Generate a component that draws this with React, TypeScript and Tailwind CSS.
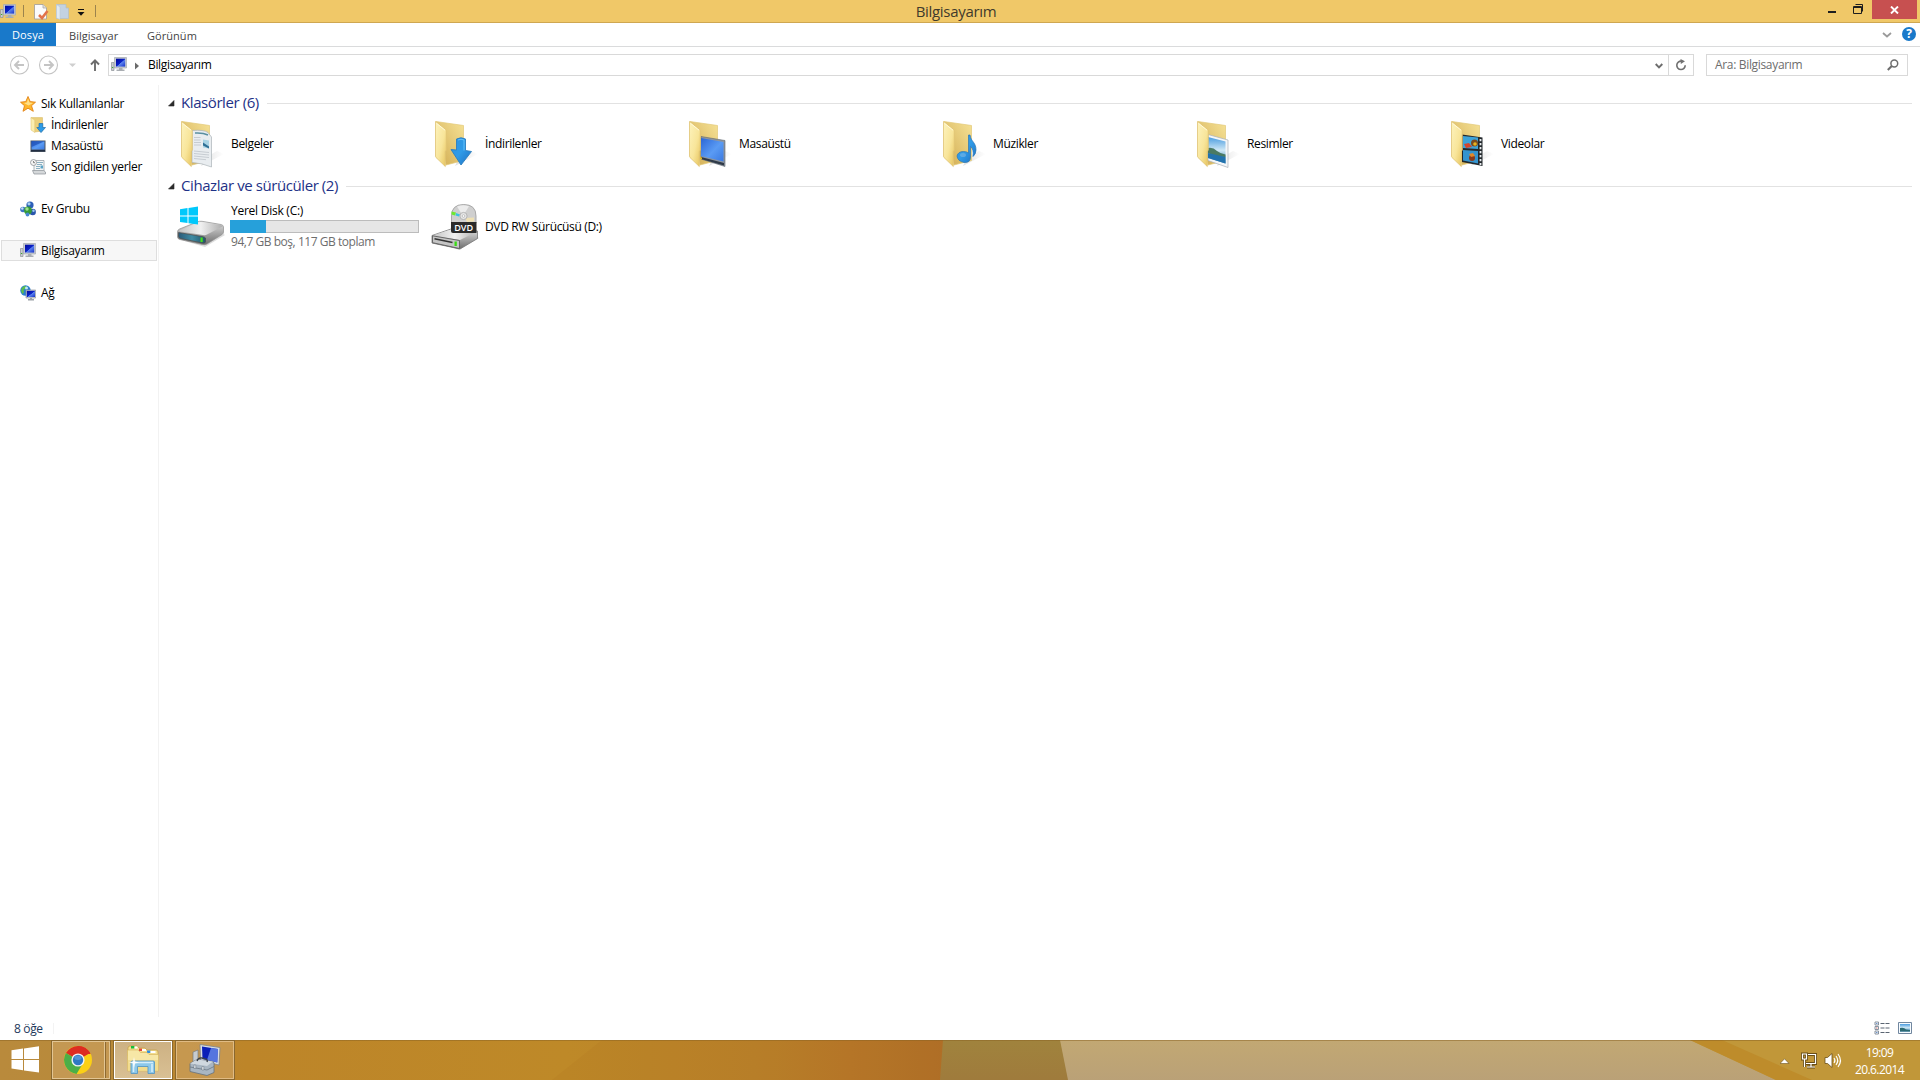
import React from "react";

type IconProps = { className?: string };

function Defs() {
  return (
    <svg className="absolute h-0 w-0" aria-hidden="true">
      <defs>
        <linearGradient id="flapG" x1="0" y1="0" x2="1" y2="1">
          <stop offset="0" stopColor="#fdf3bd" />
          <stop offset="0.55" stopColor="#f8e59a" />
          <stop offset="1" stopColor="#e6c35c" />
        </linearGradient>
        <linearGradient id="backG" x1="0" y1="1" x2="1" y2="0">
          <stop offset="0" stopColor="#cfa94e" />
          <stop offset="0.5" stopColor="#e3c673" />
          <stop offset="1" stopColor="#f6e296" />
        </linearGradient>
        <linearGradient id="shadeG" x1="0" y1="0" x2="1" y2="0">
          <stop offset="0" stopColor="#999" stopOpacity="0.5" />
          <stop offset="1" stopColor="#999" stopOpacity="0" />
        </linearGradient>
        <linearGradient id="blueG" x1="0" y1="0" x2="1" y2="1">
          <stop offset="0" stopColor="#2f93dd" />
          <stop offset="0.5" stopColor="#2f9be8" />
          <stop offset="1" stopColor="#1f6fc0" />
        </linearGradient>
        <linearGradient id="screenG" x1="0" y1="0" x2="1" y2="1">
          <stop offset="0" stopColor="#2b66d6" />
          <stop offset="0.55" stopColor="#5a9bf4" />
          <stop offset="1" stopColor="#3a78e0" />
        </linearGradient>
        <linearGradient id="navyG" x1="0" y1="0" x2="1" y2="1">
          <stop offset="0" stopColor="#00099c" />
          <stop offset="0.5" stopColor="#0b22c8" />
          <stop offset="0.55" stopColor="#5c83ee" />
          <stop offset="1" stopColor="#1733c9" />
        </linearGradient>
        <linearGradient id="metalG" x1="0" y1="0" x2="1" y2="0">
          <stop offset="0" stopColor="#c4c4c4" />
          <stop offset="0.5" stopColor="#f0f0f0" />
          <stop offset="1" stopColor="#aeaeae" />
        </linearGradient>
        <linearGradient id="sideG" x1="0" y1="0" x2="0" y2="1">
          <stop offset="0" stopColor="#e2e2e2" />
          <stop offset="1" stopColor="#6e6e6e" />
        </linearGradient>
        <linearGradient id="tealG" x1="0" y1="0" x2="1" y2="0">
          <stop offset="0" stopColor="#2a5a78" />
          <stop offset="0.5" stopColor="#3f8ba3" />
          <stop offset="1" stopColor="#22566b" />
        </linearGradient>
        <linearGradient id="skyG" x1="0" y1="0" x2="0" y2="1">
          <stop offset="0" stopColor="#4a9ce0" />
          <stop offset="0.5" stopColor="#cfe8f5" />
          <stop offset="1" stopColor="#2f7fb8" />
        </linearGradient>
      </defs>
    </svg>
  );
}

/* 48px open folder with a slot for whatever sticks out of it */
function Folder({ children, over }: { children?: React.ReactNode; over?: React.ReactNode }) {
  return (
    <svg viewBox="0 0 48 48" className="h-12 w-12 shrink-0">
      <path d="M24 46 L47 34 L40 31 L28 38Z" fill="url(#shadeG)" opacity="0.6" />
      <path d="M5 1.500 L32.500 5.500 V40.500 L15 45Z" fill="url(#backG)" stroke="#e2c877" strokeWidth="0.7" />
      {children}
      <path d="M4.500 1.500 L14.700 9.500 Q15.300 10 15.300 11 V30 L14.300 31.500 V46.500 L5 37.500 Q4.500 37 4.500 36Z" fill="url(#flapG)" stroke="#e0c374" strokeWidth="0.8" />
      <path d="M5.500 3.300 L14 10.200" stroke="#fffbe0" strokeWidth="0.9" />
      {over}
    </svg>
  );
}

const Documents = () => (
  <Folder>
    <path d="M15 10.500 Q27 9.500 31 12.500 L34.500 17 V47 Q25 43 15 42.500Z" fill="#e9edf0" stroke="#aab3b8" strokeWidth="0.7" />
    <path d="M18 13 Q26 12.500 31 15" stroke="#5a8fa0" strokeWidth="1.500" fill="none" />
    <path d="M17 17.500 H23.500 M17 20 H23.500 M17 22.500 H24 M17 25 H24 M17 31 L32 32.500 M17 33.500 L32 35 M17 36 L32 37.500 M17 38.500 L29 39.700" stroke="#bcc3c9" strokeWidth="0.8" />
    <path d="M26 19.500 L32 20.500 V28.500 L26 27.500Z" fill="#a9d3e4" />
    <path d="M26 22.500 L32 26.500 V28.500 L26 25.500Z" fill="#2e6f95" />
  </Folder>
);

const Downloads = () => (
  <Folder
    over={
      <>
        <path d="M25.500 19 Q30 16.500 34.500 19 V30.500 L40.500 31.500 L30 45 L20 29.500 L25.500 30Z" fill="url(#blueG)" stroke="#2b7fc0" strokeWidth="0.9" />
        <path d="M27 20 Q30 18.500 33 20 V30.500" stroke="#63c0fa" strokeWidth="1" fill="none" />
      </>
    }
  />
);

const Desktop = () => (
  <Folder>
    <path d="M16 16.500 L40 20.500 V46.500 L16 39Z" fill="#8e959e" stroke="#5d6670" strokeWidth="0.6" />
    <path d="M16 18 L38.500 22 V41.500 L16 36Z" fill="url(#screenG)" />
    <path d="M16 37 L39 43 V45.500 L16 39Z" fill="#2f3a48" />
    <path d="M15 37 l2 0.500 v2 l-2 -0.500z" fill="#e6b821" />
  </Folder>
);

const Music = () => (
  <Folder
    over={
      <>
        <path d="M29.500 15 H31 C32 22 37 22 37 30 Q37 34 34 36.500 Q35 29 31.500 26.500 V37 Q31.500 43 25 42.500 Q18.500 41 18 36 Q19 31.500 24.500 31.500 Q28 31.500 29.500 33Z" fill="url(#blueG)" stroke="#2a75b5" strokeWidth="0.7" />
        <ellipse cx="24" cy="35" rx="3" ry="2" fill="#79b5e5" opacity="0.6" />
      </>
    }
  />
);

const Pictures = () => (
  <Folder>
    <path d="M15 14.500 L35 20 V47.500 L15 40.500Z" fill="#f4f6f8" stroke="#a9b0b8" strokeWidth="0.7" />
    <path d="M15 17 L32.500 21.500 V43.500 L15 38Z" fill="url(#skyG)" />
    <path d="M15 28 Q20 27 24 31 Q28 34 32.500 34.500 V37 Q22 37 15 33Z" fill="#4a7a63" />
    <path d="M15 33 L32.500 37 V43.500 L15 38Z" fill="#2272ad" />
  </Folder>
);

const Videos = () => (
  <Folder>
    <path d="M15 14.500 L35.500 17.500 V46 L15 42Z" fill="#23282c" />
    <path d="M16 16 L31 17.500 V29 L16 28Z" fill="#3da3d8" />
    <path d="M16 30 L31 31 V43.500 L16 40.500Z" fill="#3494cf" />
    <circle cx="27.500" cy="23" r="3.500" fill="#7b4a1f" />
    <circle cx="28" cy="24" r="1.800" fill="#e6b421" />
    <path d="M17 24 l5 -1 l3 4 l-6 1z" fill="#d5452c" />
    <circle cx="25" cy="38" r="3" fill="#8a3b1c" />
    <path d="M22 34 l4 -1 l2 3 l-4 1z" fill="#e2882a" />
    <path d="M33.500 19 V45" stroke="#e9edf0" strokeWidth="1.800" strokeDasharray="2.200 1.800" />
  </Folder>
);

const HardDisk = () => (
  <svg viewBox="0 0 48 48" className="h-12 w-12 shrink-0">
    <path d="M4 37 L28 44 L48 32 L45 30 L20 38Z" fill="#bbb" opacity="0.5" />
    <path d="M0.500 28.500 Q0.500 27 2.500 26 L20 19 Q22 18 25 18.300 L44 21.500 Q46.500 22 46.500 24 V29 Q46.500 30.500 45 31.500 L30 41 Q28 42 25.500 41.500 L3 36.500 Q0.500 36 0.500 34Z" fill="url(#sideG)" stroke="#8f8f8f" strokeWidth="0.7" />
    <path d="M2 27.500 L21 19.500 Q22.500 18.800 25 19.100 L44.500 22.300 L45.500 23.500 L30 31.500 Q28.500 32.500 26 32 L3 28.500Z" fill="url(#metalG)" />
    <path d="M1.500 29.500 L25 33.500 Q28 34 28.500 35 V39 Q28 40.500 25.500 40 L3.500 35.500 Q1.500 35 1.500 33.500Z" fill="url(#tealG)" stroke="#4a4a4a" strokeWidth="0.700" />
    <path d="M23.500 34.500 h2.200 v4.500 h-2.200z" fill="#45e01a" />
    <path d="M3 6.200 L10.500 5 V12.500 H3Z M11.500 4.900 L21 3.500 V12.500 H11.500Z M3 13.500 H10.500 V20 L3 19Z M11.500 13.500 H21 V21.500 L11.500 20.200Z" fill="#00c8fb" />
  </svg>
);

const DvdDrive = () => (
  <svg viewBox="0 0 48 48" className="h-12 w-12 shrink-0">
    <path d="M4 38 L28 47 L48 35 L40 30Z" fill="#bbb" opacity="0.5" />
    <path d="M1 32.500 L20 26 L46.500 28 V35.500 L29 46 L1 40Z" fill="url(#sideG)" stroke="#777" strokeWidth="0.8" />
    <path d="M1.500 32.500 L20 26.500 L46 28.500 L29 37Z" fill="url(#metalG)" />
    <path d="M1.500 32.800 L28.500 37.500 V45.500 L1.500 39.700Z" fill="#c4c4c4" stroke="#5d5d5d" strokeWidth="0.9" />
    <path d="M3.500 35.700 L21.500 39.500" stroke="#333" strokeWidth="1.500" />
    <path d="M23.500 38.500 h2.300 v4.500 h-2.300z" fill="#38dc12" />
    <path d="M20.500 20 V13 Q20.500 1.500 32.700 1.500 Q45 1.500 45 13 V20Z" fill="#cfcfcf" stroke="#a2a2a2" strokeWidth="0.9" />
    <path d="M32 13 L26 3.500 Q32 1 38 3.200Z" fill="#ececec" />
    <path d="M20.500 8.500 l4.500 1 l-1 3 l-3.500 -1z" fill="#6ee82f" />
    <path d="M25 10 l4 1.500 l-1 2 l-3.500 -1z" fill="#3cc3e0" />
    <path d="M34 15 l9 -0.500 v4 l-7 0.500z" fill="#eee0b4" />
    <circle cx="32.500" cy="13" r="3.600" fill="#e6e6e6" stroke="#a9a9a9" strokeWidth="0.800" />
    <circle cx="32.500" cy="13" r="1.300" fill="#fff" stroke="#999" strokeWidth="0.500" />
    <path d="M20 19 H45.500 V30 H22 Q20 30 20 28Z" fill="#2a2a2a" />
    <text x="32.700" y="28" textAnchor="middle" fontSize="9.500" fontWeight="600" fill="#fff" fontFamily="Open Sans, sans-serif" textLength="19" lengthAdjust="spacingAndGlyphs">DVD</text>
  </svg>
);

/* 16px icons */
const Computer = ({ className = "" }: IconProps) => (
  <svg viewBox="0 0 16 16" className={`h-4 w-4 shrink-0 ${className}`}>
    <path d="M0.500 5.500 H3 V13.500 H0.500Z" fill="#c9cdd1" stroke="#8c9196" strokeWidth="0.700" />
    <path d="M1 10.500 h1.200" stroke="#3fae2a" strokeWidth="1" />
    <path d="M3.500 0.500 H15.500 V11 H3.500Z" fill="#c8ccd2" stroke="#a4a9b0" strokeWidth="0.700" />
    <path d="M5 1.700 H14.200 V9.600 H5Z" fill="url(#navyG)" />
    <path d="M8 11 h3.500 v1.500 h2 v1.500 h-8 v-1.500 h2.500z" fill="#a9adb2" />
  </svg>
);

const Star = () => (
  <svg viewBox="0 0 16 16" className="h-4 w-4 shrink-0">
    <path d="M8 0.500 L10.200 5.600 L15.500 6.200 L11.500 9.700 L13.300 15.300 L8 12.200 L3 15.300 L4.500 9.700 L0.500 6.200 L5.800 5.600Z" fill="#ffb62b" stroke="#e2831a" strokeWidth="0.900" />
    <path d="M8 2.500 L9.500 6.400 L13 7 L8.500 9.500 L4 7 L7 6.400Z" fill="#ffe08a" />
  </svg>
);

const SmallDownloads = () => (
  <svg viewBox="0 0 16 16" className="h-4 w-4 shrink-0">
    <path d="M1 0.600 H12.500 V14 L4.500 15Z" fill="#ecd07c" stroke="#d5b45a" strokeWidth="0.500" />
    <path d="M1 0.600 L4.800 3 V15.500 L1 13Z" fill="#fbeeb0" stroke="#dcbf6c" strokeWidth="0.500" />
    <path d="M9 6.500 H12.800 V10.500 H15.500 L11 15.600 L6.800 10.500 H9Z" fill="#2c9be8" stroke="#1f6fb0" strokeWidth="0.700" />
  </svg>
);

const SmallDesktop = () => (
  <svg viewBox="0 0 16 16" className="h-4 w-4 shrink-0">
    <path d="M0.500 2.500 H15.500 V14 H0.500Z" fill="#4b5560" />
    <path d="M1.500 3.300 H14.500 V11.500 H1.500Z" fill="url(#screenG)" />
    <path d="M1.500 3.300 H14.500 L1.500 9Z" fill="#1c4fb4" opacity="0.7" />
    <path d="M1 12.700 H15" stroke="#1d2b40" strokeWidth="1.200" />
  </svg>
);

const Recent = () => (
  <svg viewBox="0 0 16 16" className="h-4 w-4 shrink-0">
    <path d="M4 1.500 H14 V12.500 H4Z" fill="#f3f5f6" stroke="#9ba2a8" strokeWidth="0.800" />
    <path d="M7 3.500 H13 M7 5.500 H12 M6 7.500 H10 M6 9.500 H10" stroke="#6f9db3" strokeWidth="0.800" />
    <path d="M10.500 6.500 H13 V9.500 H10.500Z" fill="#5aa3c6" />
    <path d="M2.500 11.500 H13.500 L15.500 13 V15 H4Z" fill="#d5d8da" stroke="#8b9196" strokeWidth="0.700" />
    <circle cx="3.500" cy="3.500" r="3" fill="#f4f4f4" stroke="#8b9094" strokeWidth="0.800" />
    <path d="M3.500 2 V3.700 H5" stroke="#555" strokeWidth="0.700" fill="none" />
  </svg>
);

const HomeGroup = () => (
  <svg viewBox="0 0 16 16" className="h-4 w-4 shrink-0">
    <circle cx="10" cy="4" r="3.600" fill="#2c5fb8" />
    <circle cx="9" cy="2.800" r="1.600" fill="#a8d0f0" />
    <circle cx="3" cy="8.500" r="2.800" fill="#3d74c4" />
    <circle cx="2.300" cy="7.500" r="1.200" fill="#bfe0f7" />
    <circle cx="12.700" cy="11" r="3.200" fill="#2a56ac" />
    <circle cx="13.500" cy="9.700" r="1.200" fill="#9cc8ee" />
    <circle cx="8" cy="9.500" r="3.900" fill="#359a37" />
    <circle cx="7" cy="8" r="1.700" fill="#9ee38f" />
    <circle cx="7.500" cy="13.500" r="1.900" fill="#4787cf" />
  </svg>
);

const Network = () => (
  <svg viewBox="0 0 16 16" className="h-4 w-4 shrink-0">
    <circle cx="5.500" cy="5.500" r="5.200" fill="#2a7fd0" />
    <path d="M1.500 3.500 Q4 0 7 1.500 Q6 4 3.500 4.500 Q4.500 7 3 9 Q0.500 7 1.500 3.500Z" fill="#5dbf4a" />
    <circle cx="6.500" cy="3" r="1.500" fill="#bfe6f7" />
    <path d="M6 5 H15.700 V13 H6Z" fill="#cdd2d8" stroke="#858b92" strokeWidth="0.600" />
    <path d="M6.800 5.800 H15 V12 H6.800Z" fill="url(#navyG)" />
    <path d="M10 13 h2 v1 h2 v1.500 h-6 v-1.500 h2z" fill="#9ca2a8" />
  </svg>
);

function TitleBar() {
  return (
    <header className="relative flex h-[23px] items-start border-b border-[#cfa751] bg-[#f0c868]">
      <Computer className="mt-[4px]" />
      <div className="ml-[7px] mt-[5px] h-[12px] w-px bg-[#9c844d]" />
      <svg viewBox="0 0 16 16" className="ml-[9px] mt-[4px] h-4 w-4">
        <path d="M1.500 0.500 H10 L13.500 4 V15 H1.500Z" fill="#fbfbfb" stroke="#a9a49b" strokeWidth="0.900" />
        <path d="M10 0.500 V4 H13.500" fill="#ddd" stroke="#a9a49b" strokeWidth="0.700" />
        <path d="M6 11 L9 14 L14.500 7" stroke="#e2734a" strokeWidth="2.600" fill="none" />
      </svg>
      <svg viewBox="0 0 16 16" className="ml-[6px] mt-[4px] h-4 w-4">
        <path d="M1.500 0.500 H11 V4 H13.500 V14.500 H1.500Z" fill="#c3d2e2" stroke="#b0bfcc" strokeWidth="0.700" />
        <path d="M1.500 0.500 L5 3 V15.500 L1.500 14Z" fill="#e0e9f2" stroke="#b7c4d2" strokeWidth="0.500" />
      </svg>
      <svg viewBox="0 0 8 8" className="ml-[6px] mt-[9px] h-2 w-2">
        <path d="M1 0.500 H7" stroke="#111" />
        <path d="M0.500 3 H7.500 L4 6.800Z" fill="#111" />
      </svg>
      <div className="ml-[10px] mt-[5px] h-[12px] w-px bg-[#9c844d]" />
      <div className="pointer-events-none absolute inset-x-0 top-0 flex h-[23px] justify-center pr-[8px]">
        <h1 className="text-[15px] leading-[23px] tracking-[-0.3px] text-[#403a2c]">Bilgisayarım</h1>
      </div>
      <div className="ml-auto flex items-start">
        <svg viewBox="0 0 44 20" className="h-5 w-11">
          <path d="M0 11 H8 V13 H0Z" fill="#1e1e1e" />
          <path d="M25.500 6.500 H33.500 V13.500 H25.500Z M25 7.500 H34 M27.500 4.500 H34.500 V11.500" fill="none" stroke="#1e1e1e" />
        </svg>
        <button className="mr-[3px] flex h-[19px] w-[45px] items-center justify-center bg-[#c75050]">
          <svg viewBox="0 0 9 8" className="h-2 w-[9px]">
            <path d="M1 0.500 L8 7.500 M8 0.500 L1 7.500" stroke="#fff" strokeWidth="1.900" />
          </svg>
        </button>
      </div>
    </header>
  );
}

function Ribbon() {
  return (
    <nav className="flex h-6 border-b border-[#dadbdc] text-[11px] leading-[26px] text-[#444]">
      <div className="h-[23px] w-[56px] bg-[#1979ca] pl-[12px] leading-[24px] tracking-[0.1px] text-white">Dosya</div>
      <div className="ml-[13px] w-[78px] tracking-[0.03px]">Bilgisayar</div>
      <div className="tracking-[0.05px]">Görünüm</div>
      <svg viewBox="0 0 10 6" className="ml-auto mr-[10px] mt-[9px] h-[6px] w-[10px]">
        <path d="M1 1 L5 4.500 L9 1" stroke="#9a9a9a" strokeWidth="1.800" fill="none" />
      </svg>
      <div className="mr-[4px] mt-[4px] flex h-[14px] w-[14px] items-center justify-center rounded-full bg-[#1979ca] text-[12px] font-bold leading-none text-white">?</div>
    </nav>
  );
}

function AddressRow() {
  return (
    <div className="flex h-[38px] items-start pt-[7px] text-[12px]">
      <svg viewBox="0 0 98 22" className="h-[22px] w-[98px] overflow-visible">
        <g fill="none" stroke="#c4c4c4" strokeWidth="1.100">
          <circle cx="19.500" cy="11" r="9" />
          <circle cx="48.500" cy="11" r="9" />
          <path d="M24 11 H15.500 M19 7 L15 11 L19 15 M44 11 H52.500 M49 7 L53 11 L49 15" strokeWidth="1.900" />
        </g>
        <path d="M69 9.500 H76 L72.500 13Z" fill="#cfcfcf" />
        <path d="M95 17 V6.500 M91 10.500 L95 6.300 L99 10.500" fill="none" stroke="#6d6d6d" strokeWidth="1.900" />
      </svg>
      <div className="ml-[10px] flex h-[22px] w-[1586px] items-center border border-[#d9d9d9]">
        <Computer className="ml-[2px]" />
        <svg viewBox="0 0 4 8" className="ml-[8px] mt-px h-2 w-1">
          <path d="M0 0.500 L4 4 L0 7.500Z" fill="#6a6a6a" />
        </svg>
        <span className="ml-[9px] tracking-[-0.33px] text-black">Bilgisayarım</span>
        <svg viewBox="0 0 8 6" className="ml-auto mr-[5px] mt-px h-[6px] w-2">
          <path d="M0.700 1 L4 4.300 L7.300 1" stroke="#6d6d6d" strokeWidth="1.900" fill="none" />
        </svg>
        <div className="flex h-full w-[25px] items-center justify-center border-l border-[#d9d9d9]">
          <svg viewBox="0 0 12 12" className="h-3 w-3">
            <path d="M6.500 2.200 A4.200 4.200 0 1 0 10.200 6.300" fill="none" stroke="#707070" strokeWidth="1.600" />
            <path d="M5.500 0 L10 2.200 L5.800 5Z" fill="#707070" />
          </svg>
        </div>
      </div>
      <div className="ml-[12px] flex h-[22px] w-[202px] items-center justify-between border border-[#d9d9d9] pl-[8px] pr-[8px]">
        <span className="tracking-[-0.33px] text-[#6d6d6d]">Ara: Bilgisayarım</span>
        <svg viewBox="0 0 12 12" className="h-3 w-3">
          <circle cx="7.300" cy="4.500" r="3.400" fill="none" stroke="#6d6d6d" strokeWidth="1.500" />
          <path d="M4.800 7 L0.800 11" stroke="#6d6d6d" strokeWidth="2" />
        </svg>
      </div>
    </div>
  );
}

function NavItem({ icon, label, child = false, active = false }: { icon: React.ReactNode; label: string; child?: boolean; active?: boolean }) {
  return (
    <li
      className={`flex h-[21px] items-center gap-[5px] border ${child ? "pl-[28px]" : "pl-[18px]"} ${active ? "border-[#dedede] bg-[#f7f7f7]" : "border-transparent"}`}
    >
      {icon}
      <span className="whitespace-nowrap text-[12px] leading-none tracking-[-0.32px]">{label}</span>
    </li>
  );
}

function Sidebar() {
  return (
    <aside className="w-[159px] border-r border-[#f2f2f2] pl-px pr-px pt-[8px]">
      <ul>
        <NavItem icon={<Star />} label="Sık Kullanılanlar" />
        <NavItem icon={<SmallDownloads />} label="İndirilenler" child />
        <NavItem icon={<SmallDesktop />} label="Masaüstü" child />
        <NavItem icon={<Recent />} label="Son gidilen yerler" child />
      </ul>
      <ul className="mt-[21px] flex flex-col gap-[21px]">
        <NavItem icon={<HomeGroup />} label="Ev Grubu" />
        <NavItem icon={<Computer />} label="Bilgisayarım" active />
        <NavItem icon={<Network />} label="Ağ" />
      </ul>
    </aside>
  );
}

function SectionTitle({ children }: { children: React.ReactNode }) {
  return (
    <div className="flex h-6 items-center">
      <svg viewBox="0 0 7 7" className="ml-[9px] h-[7px] w-[7px]">
        <path d="M6 0.500 V6 H0.500Z" fill="#2a2a2a" stroke="#2a2a2a" strokeWidth="0.600" />
      </svg>
      <h2 className="-mt-[2px] ml-[6px] whitespace-nowrap text-[15px] leading-[22px] tracking-[-0.42px] text-[#1e3287]">{children}</h2>
      <div className="ml-[8px] mr-[8px] mt-px h-px flex-1 bg-[#e2e2e2]" />
    </div>
  );
}

function Tile({ icon, children }: { icon: React.ReactNode; children: React.ReactNode }) {
  return (
    <div className="flex h-12 w-[254px] items-center">
      {icon}
      <div className="ml-[6px] text-[12px] leading-[16px] tracking-[-0.35px]">{children}</div>
    </div>
  );
}

function Content() {
  return (
    <main className="flex-1 pt-[6px]">
      <SectionTitle>Klasörler (6)</SectionTitle>
      <div className="mt-[5px] flex pl-[18px]">
        <Tile icon={<Documents />}>Belgeler</Tile>
        <Tile icon={<Downloads />}>İndirilenler</Tile>
        <Tile icon={<Desktop />}>Masaüstü</Tile>
        <Tile icon={<Music />}>Müzikler</Tile>
        <Tile icon={<Pictures />}>Resimler</Tile>
        <Tile icon={<Videos />}>Videolar</Tile>
      </div>
      <div className="mt-[6px]">
        <SectionTitle>Cihazlar ve sürücüler (2)</SectionTitle>
      </div>
      <div className="mt-[5px] flex pl-[18px]">
        <Tile icon={<HardDisk />}>
          <div className="-mt-px pb-px leading-[17px] tracking-[-0.25px]">Yerel Disk (C:)</div>
          <div className="-ml-px h-[13px] w-[189px] border border-[#bcbcbc] bg-[#e6e6e6]">
            <div className="-ml-px -mt-px h-[13px] w-[36px] bg-[#26a0da]" />
          </div>
          <div className="whitespace-nowrap leading-[18px] tracking-[-0.46px] text-[#6d6d6d]">94,7 GB boş, 117 GB toplam</div>
        </Tile>
        <Tile icon={<DvdDrive />}>DVD RW Sürücüsü (D:)</Tile>
      </div>
    </main>
  );
}

function StatusBar() {
  return (
    <footer className="flex h-[23px] items-center pl-[14px] pr-[8px]">
      <span className="text-[12px] leading-none tracking-[-0.35px] text-[#1e395b]">8 öğe</span>
      <div className="ml-[10px] h-[11px] w-px bg-[#f3f3f3]" />
      <svg viewBox="0 0 16 14" className="-mt-[2px] ml-auto h-[14px] w-4">
        <g fill="#fff" stroke="#7b8794" strokeWidth="0.900">
          <path d="M1 1 h3.500 v3 h-3.500z M1 5.500 h3.500 v3 h-3.500z M1 10 h3.500 v3 h-3.500z" />
        </g>
        <path d="M2.200 2.500 h1.200 M2.200 11.500 h1.200" stroke="#4b7cc0" />
        <path d="M2.200 7 h1.200" stroke="#c04b4b" />
        <path d="M6.500 2.500 h4 M11.500 2.500 h4 M6.500 7 h4 M11.500 7 h4 M6.500 11.500 h4 M11.500 11.500 h4" stroke="#5a6572" />
      </svg>
      <svg viewBox="0 0 14 12" className="-mt-px ml-[8px] h-3 w-[14px]">
        <path d="M0.500 0.500 H13.500 V11.500 H0.500Z" fill="#f6fbff" stroke="#71879f" />
        <path d="M2 2 H12 V9.500 H2Z" fill="url(#skyG)" />
        <path d="M2 6 Q6 5 8 7.500 L12 8 V9.500 H2Z" fill="#2c6a72" />
      </svg>
    </footer>
  );
}

function Wallpaper() {
  return (
    <svg viewBox="0 0 1920 40" preserveAspectRatio="none" className="absolute inset-0 h-10 w-full">
      <defs>
        <linearGradient id="wallL" x1="0" x2="1" y1="0" y2="0">
          <stop offset="0" stopColor="#b98a3c" />
          <stop offset="0.1" stopColor="#b88a3a" />
          <stop offset="0.26" stopColor="#bd8529" />
          <stop offset="0.6" stopColor="#be8928" />
          <stop offset="0.8" stopColor="#b9822a" />
          <stop offset="0.9" stopColor="#b77829" />
          <stop offset="1" stopColor="#b07028" />
        </linearGradient>
        <linearGradient id="wallO" x1="0" x2="0" y1="0" y2="1">
          <stop offset="0" stopColor="#a0833d" />
          <stop offset="1" stopColor="#9f7b3c" />
        </linearGradient>
        <linearGradient id="wallT" x1="0" x2="0" y1="0" y2="1">
          <stop offset="0" stopColor="#c2a873" />
          <stop offset="1" stopColor="#baa177" />
        </linearGradient>
      </defs>
      <path d="M0 0 H945 V40 H0Z" fill="url(#wallL)" />
      <path d="M602 0 H945 V40 H552Z" fill="#a96320" opacity="0.1" />
      <path d="M943 0 H1062 L1070 40 H940Z" fill="url(#wallO)" />
      <path d="M1060 0 H1700 L1780 40 H1068Z" fill="url(#wallT)" />
      <path d="M1690 0 H1920 V40 H1776Z" fill="#c19739" />
      <path d="M1690 0 H1722 L1812 40 H1776Z" fill="#be8c2b" />
      <path d="M0 0.500 H1920" stroke="#8b6424" opacity="0.5" />
    </svg>
  );
}

const Chrome = () => (
  <svg viewBox="0 0 30 30" className="h-[30px] w-[30px]">
    <circle cx="15" cy="15" r="14" fill="#fbd016" />
    <path d="M15 15 L2.900 8 A14 14 0 0 1 27.100 8Z" fill="#dd2c22" />
    <path d="M15 1 A14 14 0 0 1 27.600 9 H15Z" fill="#dd2c22" />
    <path d="M15 15 L2.900 8 A14 14 0 0 0 13.500 28.900 L20.500 17.500Z" fill="#4cae48" />
    <circle cx="15" cy="15" r="6.600" fill="#f2f2f2" />
    <circle cx="15" cy="15" r="5.200" fill="#2f78c4" />
    <ellipse cx="15" cy="12.700" rx="3.600" ry="2.200" fill="#6aa6e2" opacity="0.6" />
  </svg>
);

const ExplorerIcon = () => (
  <svg viewBox="0 0 34 32" className="h-8 w-[34px]">
    <path d="M2 4 Q2 2 4 2 H11 L13 4 H19 L21 6 H30 Q32 6 32 8 V12 H2Z" fill="#f3dd8e" stroke="#c49f45" strokeWidth="0.700" />
    <path d="M5 2 h3.500 v2.500 H5z" fill="#17c03a" />
    <path d="M8.500 2.500 h3 v2 h-3z" fill="#fff" />
    <path d="M13 4.500 h3 v2.500 h-3z" fill="#e04a3a" />
    <path d="M16 5 h4 v2 h-4z" fill="#fff" />
    <path d="M21 6.500 h3.500 v2.500 H21z" fill="#2f8ee0" />
    <path d="M24.500 7 h5 v2 h-5z" fill="#fff" />
    <path d="M1.500 6 H12 L14.500 8.500 H21 L23 10.500 H32.500 V27 H1.500Z" fill="#f7e7a6" stroke="#d8b962" strokeWidth="0.700" />
    <path d="M2 16 H32 V27 H2Z" fill="#efd784" opacity="0.7" />
    <path d="M5 18 Q5 17 6.500 17 H27 Q28.500 17 28.500 18 V29.500 H22 V22.500 H11.500 V29.500 H5Z" fill="#8cc8ea" stroke="#5a98c2" strokeWidth="0.900" />
    <path d="M6.500 18.500 H27 M7.500 20 V28 M26 20 V28" stroke="#d6eefb" strokeWidth="1.500" />
    <path d="M8 13 L9 17.500 L13 18.500 L9 19.500 L8 24 L7 19.500 L3 18.500 L7 17.500Z" fill="#fff" opacity="0.9" />
  </svg>
);

const SystemTool = () => (
  <svg viewBox="0 0 34 34" className="h-[34px] w-[34px]">
    <path d="M5 9 L10 7 V20 L5 21Z" fill="#c7ccd0" stroke="#777d83" strokeWidth="0.700" />
    <path d="M12 1.500 L32 4.500 L31 22 L12.500 17.500Z" fill="#d9dde1" stroke="#7d8389" strokeWidth="0.800" />
    <path d="M14 3.500 L30 6 L29.300 19.500 L14.500 16Z" fill="#0a1fb8" />
    <path d="M23 5 L30 6 L29.300 19.500 L19 17Z" fill="#6f93ec" opacity="0.75" />
    <path d="M2 20.500 L9 16.500 L25 18.500 L26 20 V29.500 L19 32.500 L2 28.500Z" fill="#a9b6c2" stroke="#66727e" strokeWidth="0.800" />
    <path d="M2 20.500 L9 16.500 L25 18.500 L19 23Z" fill="#d0d8df" />
    <path d="M2 24 L19 27 L26 23.500" stroke="#6c7985" strokeWidth="0.800" fill="none" />
    <path d="M9 18 Q10 14.500 14 15 L18 16 Q20 17 19 19" stroke="#3a4148" strokeWidth="1.300" fill="none" />
    <path d="M6 22 h1.800 v3.500 h-1.800z M14 23.500 h1.800 v3.500 h-1.800z" fill="#eef1f4" stroke="#66727e" strokeWidth="0.500" />
  </svg>
);

function Taskbar() {
  return (
    <div className="relative h-10 overflow-hidden">
      <Wallpaper />
      <div className="relative flex h-10 items-stretch pb-px pt-px">
        <div className="flex w-[52px] items-start pl-[11px] pt-[5px]">
          <svg viewBox="0 0 28 27" className="h-[27px] w-7">
            <path d="M0.500 4.300 L12 2.600 V12.900 H0.500Z M13 2.400 L28 0.300 V12.900 H13Z M0.500 13.900 H12 V24.200 L0.500 22.600Z M13 13.900 H28 V26.500 L13 24.400Z" fill="#fff" />
          </svg>
        </div>
        <div className="flex w-[58px] shadow-[0_0_0_1px_#8a682f]">
          <div className="flex w-[53px] items-center justify-center border border-[#e2c593] bg-[#cfa56a]/50 pr-[2px]">
            <Chrome />
          </div>
          <div className="w-[5px] border border-l-0 border-[#e2c593] bg-[#cfa56a]/50 shadow-[inset_1px_0_0_#8f6a30]" />
        </div>
        <div className="ml-[4px] flex w-[58px] items-center justify-center border border-white bg-gradient-to-b from-[#cdb183] to-[#d9c094] shadow-[0_0_0_1px_#8a682f]">
          <ExplorerIcon />
        </div>
        <div className="ml-[4px] flex w-[58px] items-center justify-center border border-[#e0bb83] bg-[#cfa56a]/55 shadow-[0_0_0_1px_#8a682f]">
          <SystemTool />
        </div>
        <div className="ml-auto flex text-white">
          <svg viewBox="0 0 64 38" className="h-[38px] w-16">
            <path d="M0 22.500 H9 L4.500 17.800Z" fill="#fff" stroke="#6f531c" strokeWidth="0.600" />
            <g fill="none" stroke="#6a4e17" strokeWidth="3">
              <path d="M28 13.500 H35.500 V22.500 H26 M31 22.500 V25.500 M27 26 H35" />
              <path d="M22.500 13 H26.500 V18 H22.500Z M24.500 18 V26" />
            </g>
            <g fill="none" stroke="#fff" strokeWidth="1.200">
              <path d="M28 13.500 H35.500 V22.500 H26 M31 22.500 V25.500 M27 26 H35" />
              <path d="M22.500 13 H26.500 V18 H22.500Z M24.500 18 V26" />
            </g>
            <path d="M45 16.500 H47.500 L52 12.500 V26.500 L47.500 22.500 H45Z" fill="#fff" stroke="#6a4e17" strokeWidth="0.800" />
            <path d="M54 17 Q56 19.500 54 22 M56 15 Q59.500 19.500 56 24 M58 13 Q63 19.500 58 26" fill="none" stroke="#fff" strokeWidth="1.100" />
          </svg>
          <div className="mr-[13px] flex w-[63px] flex-col items-center pl-[8px] pt-[3px] text-[12px] leading-[17px] tracking-[-0.6px]">
            <span>19:09</span>
            <span>20.6.2014</span>
          </div>
        </div>
      </div>
    </div>
  );
}

export default function App() {
  return (
    <div className="flex h-[1080px] w-[1920px] flex-col overflow-hidden bg-white font-['Open_Sans','Noto_Sans',sans-serif] text-black">
      <Defs />
      <TitleBar />
      <Ribbon />
      <AddressRow />
      <div className="flex flex-1">
        <Sidebar />
        <Content />
      </div>
      <StatusBar />
      <Taskbar />
    </div>
  );
}
